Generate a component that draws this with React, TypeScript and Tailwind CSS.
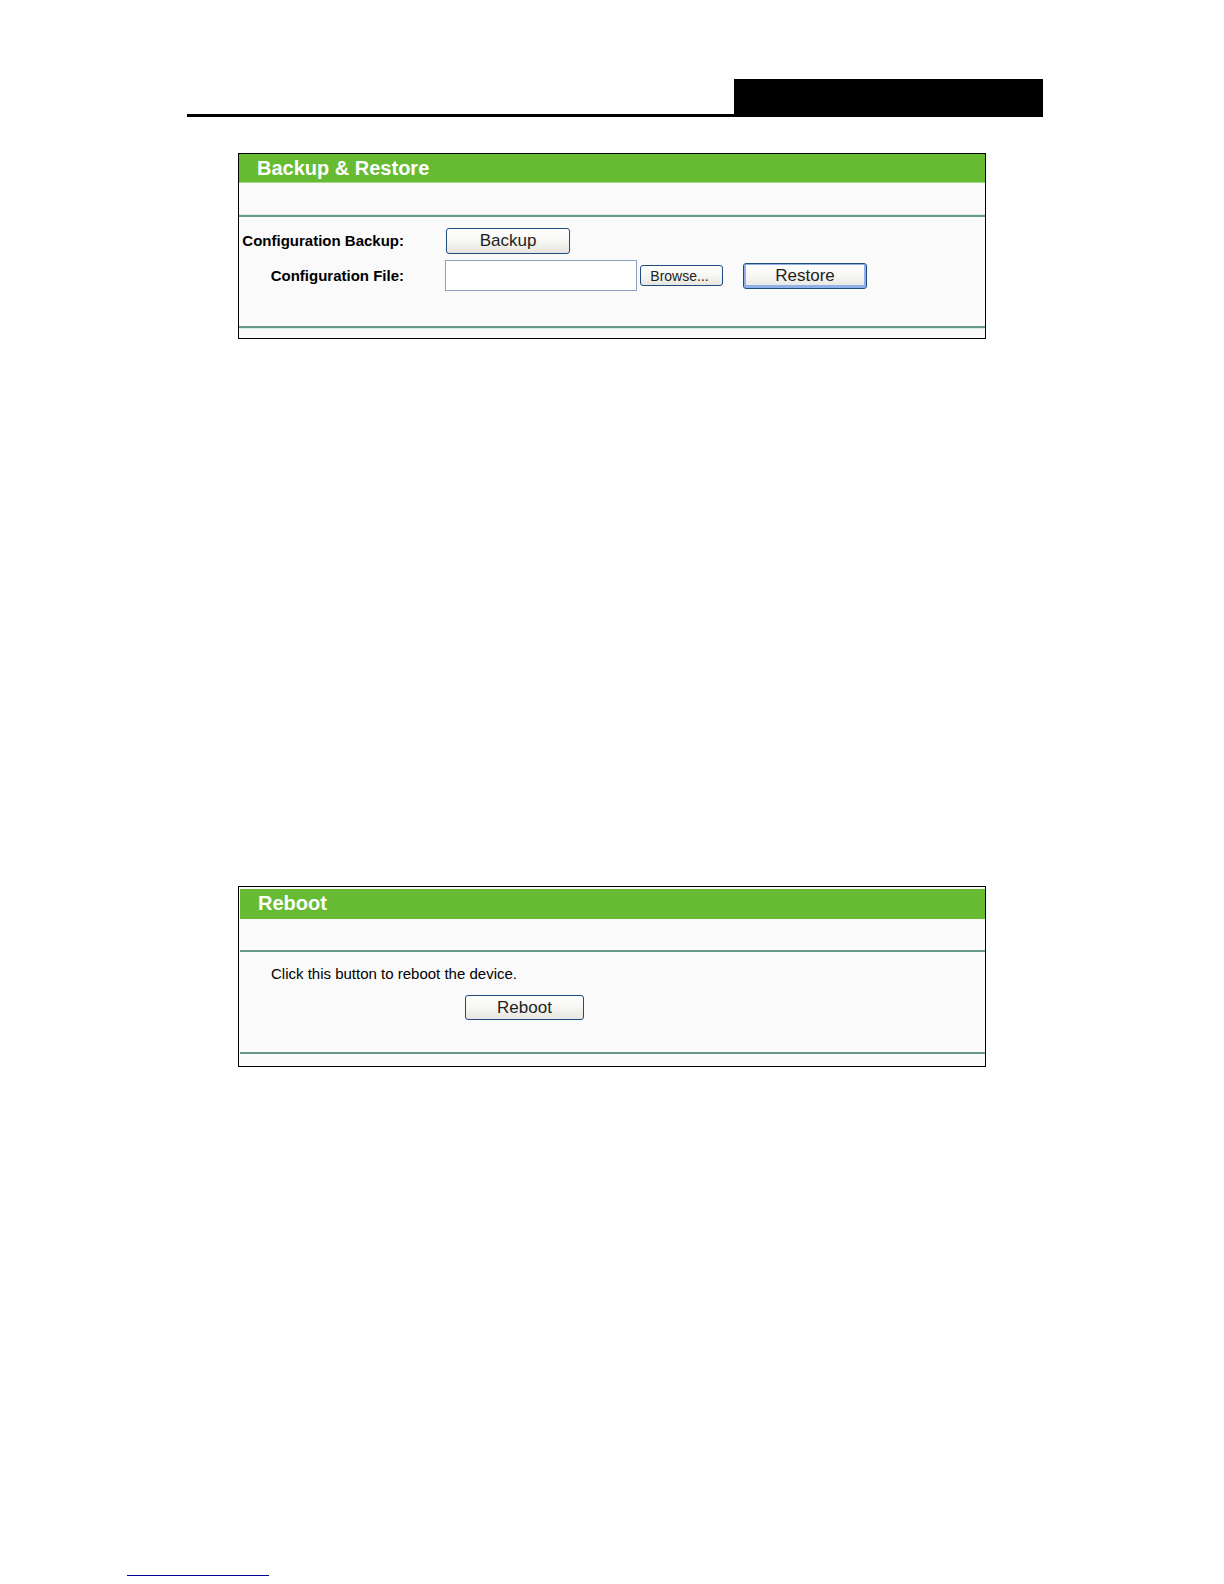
import React from "react";

const buttonBase =
  "rounded-[3px] border border-[#1f4a80] bg-linear-to-b from-white via-[#f6f6f3] to-[#e6e5df] text-[#222]";

type PanelProps = {
  title: string;
  inset?: boolean;
  children: React.ReactNode;
};

// Bordered box with a green title bar and two rules round the body
const Panel = ({ title, inset, children }: PanelProps) => {
  return (
    <section
      className={
        inset
          ? "border border-black bg-[#fafafa] pt-[2px] pl-px"
          : "border border-black bg-[#fafafa]"
      }
    >
      <h2
        className={
          inset
            ? "h-[30px] bg-[#66bb33] pl-[18px] text-[20px] leading-[28px] font-bold text-white"
            : "h-[29px] border-b border-[#a3d583] bg-[#66bb33] pl-[18px] text-[20px] leading-[28px] font-bold text-white"
        }
      >
        {title}
      </h2>
      <div
        className={
          inset
            ? "mt-[31px] mb-3 border-y-2 border-[#669988]"
            : "mt-8 mb-[10px] border-y-2 border-[#669988] shadow-[0_1px_0_#d9efe6,0_-1px_0_#d9efe6]"
        }
      >
        {children}
      </div>
    </section>
  );
};

const App = () => {
  return (
    <div className="flex min-h-screen flex-col bg-white font-['Liberation_Sans',Arial,sans-serif] text-black">
      {/* Page header */}
      <header className="mt-[79px] mr-[181px] ml-[187px] flex justify-end border-b-[3px] border-black">
        <div className="h-[35px] w-[309px] bg-black" />
      </header>

      <main className="mt-9 mr-[238px] ml-[238px]">
        {/* Backup & Restore */}
        <Panel title="Backup & Restore">
          <form className="flex flex-col gap-[6px] pt-[11px] pb-[35px]">
            <div className="flex items-center">
              <label
                htmlFor="backup"
                className="w-[165px] text-right text-[15px] leading-5 font-bold whitespace-nowrap"
              >
                Configuration Backup:
              </label>
              <button
                id="backup"
                type="button"
                className={`${buttonBase} ml-[42px] h-[26px] w-[124px] text-[17px] leading-6`}
              >
                Backup
              </button>
            </div>
            <div className="flex items-center">
              <label
                htmlFor="file"
                className="w-[165px] text-right text-[15px] leading-5 font-bold whitespace-nowrap"
              >
                Configuration File:
              </label>
              <input
                id="file"
                type="text"
                className="ml-[41px] h-[31px] w-[192px] border border-[#8c9fc4] bg-white px-1 text-[15px]"
              />
              <button
                type="button"
                className={`${buttonBase} ml-[3px] h-[21px] w-[83px] pr-1 text-[14px] leading-4`}
              >
                Browse...
              </button>
              <button
                type="button"
                className={`${buttonBase} ml-5 h-[26px] w-[124px] text-[17px] leading-6 inset-shadow-[0_-1px_0_2px_#8fb0ea]`}
              >
                Restore
              </button>
            </div>
          </form>
        </Panel>

        {/* Reboot */}
        <div className="mt-[547px]">
          <Panel title="Reboot" inset>
            <div className="pt-3 pb-8 pl-[31px]">
              <p className="text-[15px] leading-5">
                Click this button to reboot the device.
              </p>
              <button
                type="button"
                className={`${buttonBase} mt-[11px] ml-[194px] block h-[25px] w-[119px] text-[17px] leading-6`}
              >
                Reboot
              </button>
            </div>
          </Panel>
        </div>
      </main>

      {/* Footer rule */}
      <footer className="mt-auto mb-2 ml-[127px] w-[142px] border-b border-[#000099]" />
    </div>
  );
};

export default App;
